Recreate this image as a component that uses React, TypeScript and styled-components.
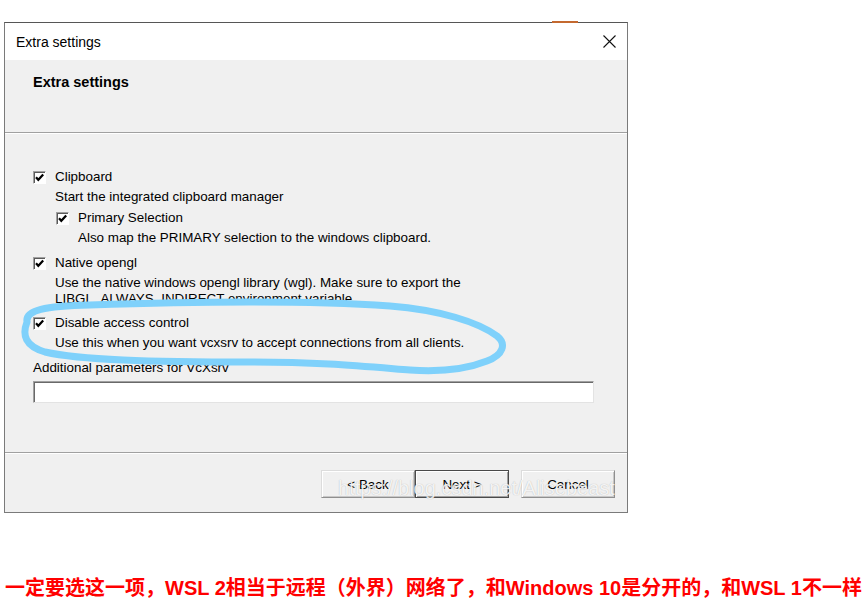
import React from "react";
import styled, { createGlobalStyle, css } from "styled-components";

const GlobalStyle = createGlobalStyle`
  html, body { margin: 0; padding: 0; background: #ffffff; }
  body { font-family: "Liberation Sans", Arial, sans-serif; }
`;

const Page = styled.div`
  position: relative;
  width: 867px;
  height: 609px;
  overflow: hidden;
  background: #ffffff;
  padding: 22px 0 0 4px;
  box-sizing: border-box;
`;

const Dialog = styled.div`
  width: 624px;
  height: 491px;
  box-sizing: border-box;
  border: 1px solid #7a7a7a;
  border-top-color: #565656;
  background: #f0f0f0;
  display: flex;
  flex-direction: column;
  font-family: "Liberation Sans", Arial, sans-serif;
  color: #000;
`;

const TitleBar = styled.div`
  flex: 0 0 auto;
  height: 37px;
  background: #ffffff;
  display: flex;
  align-items: center;
  justify-content: space-between;
  padding-left: 11px;
`;

const TitleText = styled.span`
  font-size: 14px;
  line-height: 16px;
  color: #000;
`;

const CloseIcon = styled.svg`
  width: 13px;
  height: 13px;
  margin-right: 11px;
`;

const Header = styled.div`
  flex: 0 0 auto;
  height: 73px;
  box-sizing: border-box;
  padding: 14px 28px 0;
  border-bottom: 1px solid #a0a0a0;
`;

const HeaderTitle = styled.div`
  font-size: 14.5px;
  font-weight: bold;
  line-height: 16px;
`;

const Content = styled.div`
  flex: 1 1 auto;
  padding: 34px 0 0 28px;
  box-shadow: inset 0 1px 0 #ffffff;
  font-size: 13.4px;
  line-height: 16px;
`;

const Option = styled.div<{ $gap: number }>`
  margin-top: ${(p) => p.$gap}px;
`;

const OptionRow = styled.div`
  height: 20px;
  display: flex;
  align-items: center;
`;

const CheckBox = styled.span`
  width: 13px;
  height: 13px;
  box-sizing: border-box;
  background: #ffffff;
  border: 1px solid;
  border-color: #a0a0a0 #ffffff #ffffff #a0a0a0;
  box-shadow: inset 1px 1px 0 #5a5a5a;
  display: flex;
  align-items: center;
  justify-content: center;
  flex: 0 0 auto;
`;

const Label = styled.span`
  margin-left: 9px;
  white-space: nowrap;
`;

const Desc = styled.div`
  margin-top: 2px;
  padding-left: 22px;
  white-space: nowrap;
`;

const Nested = styled.div`
  padding-left: 23px;
`;

const FieldLabel = styled.div`
  margin-top: 9px;
  white-space: nowrap;
`;

const TextInput = styled.div`
  margin-top: 5px;
  width: 561px;
  height: 22px;
  box-sizing: border-box;
  background: #ffffff;
  border: 1px solid;
  border-color: #a0a0a0 #e3e3e3 #e3e3e3 #a0a0a0;
  box-shadow: inset 1px 1px 0 #696969;
`;

const Footer = styled.div`
  flex: 0 0 auto;
  height: 60px;
  box-sizing: border-box;
  border-top: 1px solid #a0a0a0;
  box-shadow: inset 0 1px 0 #ffffff;
  padding: 17px 12px 0;
  display: flex;
  justify-content: flex-end;
  align-items: flex-start;
`;

const Button = styled.button<{ $default?: boolean; $spaced?: boolean }>`
  width: 94px;
  height: 28px;
  box-sizing: border-box;
  padding: 0;
  font-family: "Liberation Sans", Arial, sans-serif;
  font-size: 13.4px;
  color: #000;
  background: #f0f0f0;
  border: 1px solid;
  border-color: #dcdcdc #8f8f8f #8f8f8f #dcdcdc;
  box-shadow: inset 1px 1px 0 #ffffff, inset -1px -1px 0 #c8c8c8;
  margin-left: ${(p) => (p.$spaced ? 12 : 0)}px;
  ${(p) =>
    p.$default &&
    css`
      border-color: #4a4a4a;
      box-shadow: inset 1px 1px 0 #ffffff, inset -1px -1px 0 #a0a0a0;
    `}
`;

const Caption = styled.div`
  margin-top: 63px;
  padding-left: 1px;
  font-family: "Liberation Sans", "Noto Sans CJK SC", sans-serif;
  font-weight: bold;
  font-size: 20px;
  line-height: 24px;
  color: #ff0000;
  white-space: nowrap;
`;

const Annotation = styled.svg`
  position: absolute;
  left: 0;
  top: 0;
  pointer-events: none;
`;

const Watermark = styled.span`
  position: absolute;
  left: 338px;
  top: 476px;
  font-family: "Liberation Sans", Arial, sans-serif;
  font-size: 20px;
  line-height: 24px;
  color: rgba(255, 255, 255, 0.85);
  text-shadow: 0 0 1px rgba(0, 0, 0, 0.28);
  pointer-events: none;
  white-space: nowrap;
`;

const EdgeGlint = styled.span`
  position: absolute;
  left: 552px;
  top: 21px;
  width: 26px;
  height: 2px;
  background: #c4692f;
`;

const Check = () => (
  <CheckBox>
    <svg width="9" height="9" viewBox="0 0 9 9">
      <polyline points="1,4.2 3.3,6.8 8.2,1.4" fill="none" stroke="#000" strokeWidth="2.2" />
    </svg>
  </CheckBox>
);

export default function App() {
  return (
    <>
      <GlobalStyle />
      <Page>
        <Dialog>
          <TitleBar>
            <TitleText>Extra settings</TitleText>
            <CloseIcon viewBox="0 0 13 13">
              <path d="M0.5 0.5 L12.5 12.5 M12.5 0.5 L0.5 12.5" stroke="#111" strokeWidth="1.1" fill="none" />
            </CloseIcon>
          </TitleBar>
          <Header>
            <HeaderTitle>Extra settings</HeaderTitle>
          </Header>
          <Content>
            <Option $gap={0}>
              <OptionRow>
                <Check />
                <Label>Clipboard</Label>
              </OptionRow>
              <Desc>Start the integrated clipboard manager</Desc>
              <Nested>
                <Option $gap={3}>
                  <OptionRow>
                    <Check />
                    <Label>Primary Selection</Label>
                  </OptionRow>
                  <Desc>Also map the PRIMARY selection to the windows clipboard.</Desc>
                </Option>
              </Nested>
            </Option>
            <Option $gap={7}>
              <OptionRow>
                <Check />
                <Label>Native opengl</Label>
              </OptionRow>
              <Desc>
                Use the native windows opengl library (wgl). Make sure to export the
                <br />
                LIBGL_ALWAYS_INDIRECT environment variable.
              </Desc>
            </Option>
            <Option $gap={6}>
              <OptionRow>
                <Check />
                <Label>Disable access control</Label>
              </OptionRow>
              <Desc>Use this when you want vcxsrv to accept connections from all clients.</Desc>
            </Option>
            <FieldLabel>Additional parameters for VcXsrv</FieldLabel>
            <TextInput />
          </Content>
          <Footer>
            <Button>&lt; Back</Button>
            <Button $default>Next &gt;</Button>
            <Button $spaced>Cancel</Button>
          </Footer>
        </Dialog>
        <Caption>一定要选这一项，WSL 2相当于远程（外界）网络了，和Windows 10是分开的，和WSL 1不一样</Caption>
        <EdgeGlint />
        <Watermark>https://blog.csdn.net/Alisebeast</Watermark>
        <Annotation width="867" height="609" viewBox="0 0 867 609">
          <path
            d="M27 322 C25 310, 45 306, 90 305 C180 302, 300 300, 390 306 C440 310, 478 322, 497 336 C507 344, 503 355, 487 361 C467 369, 440 372, 410 370 C360 366, 320 362, 250 362 C150 362, 80 360, 45 352 C25 346, 22 335, 27 322"
            fill="none"
            stroke="#7fd1fb"
            strokeWidth="7"
            strokeLinecap="round"
            strokeLinejoin="round"
          />
        </Annotation>
      </Page>
    </>
  );
}
